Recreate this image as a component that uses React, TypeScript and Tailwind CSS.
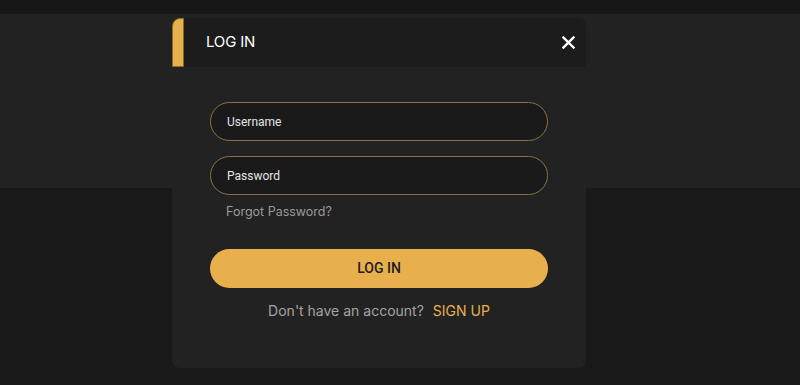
import React from "react";

export default function App() {
  return (
    <div className="relative w-[800px] h-[385px] overflow-hidden bg-[#191919]">
      <div className="h-[14px] bg-[#171717]" />
      <div className="h-[174px] bg-[#222222]" />
      <div className="absolute left-[172px] top-[18px] w-[414px] h-[350px] rounded-[8px] bg-[#232222] flex flex-col">
        <div className="h-[49px] flex items-center bg-[#1c1c1c] rounded-t-[8px]">
          <div className="w-[12px] h-full bg-[#e8b04c] rounded-tl-[8px] border border-[#8a6a2a]" />
          <div className="ml-[22px] flex-1 text-[15px] text-white font-['Inter',sans-serif] tracking-[-0.2px]">LOG IN</div>
          <svg className="mr-[11px]" width="13" height="13" viewBox="0 0 13 13">
            <path d="M1.5 1.5 L11.5 11.5 M11.5 1.5 L1.5 11.5" stroke="white" strokeWidth="2.4" strokeLinecap="square" />
          </svg>
        </div>
        <div className="flex flex-col px-[38px] pt-[35px]">
          <div className="h-[39px] rounded-full border border-[#8a7143] bg-[#1a1a1a] flex items-center pl-[16px] text-[12px] text-[#e6e6e6] font-['Roboto',sans-serif]">
            Username
          </div>
          <div className="mt-[15px] h-[39px] rounded-full border border-[#8a7143] bg-[#1a1a1a] flex items-center pl-[16px] text-[12px] text-[#e6e6e6] font-['Roboto',sans-serif]">
            Password
          </div>
          <div className="mt-[8px] pl-[16px] text-[12.5px] text-[#9a9a9a] font-['Inter',sans-serif] leading-[18px]">
            Forgot Password?
          </div>
          <div className="mt-[28px] h-[39px] rounded-full bg-[#e8b04c] flex items-center justify-center text-[14px] font-medium text-[#1d1d1d] font-['Roboto',sans-serif]">
            LOG IN
          </div>
          <div className="mt-[13px] flex justify-center items-center gap-[9px] text-[14px] font-['Inter',sans-serif] leading-[20px]">
            <span className="text-[#a3a3a3]">Don't have an account?</span>
            <span className="text-[#e8b04c]">SIGN UP</span>
          </div>
        </div>
      </div>
    </div>
  );
}
